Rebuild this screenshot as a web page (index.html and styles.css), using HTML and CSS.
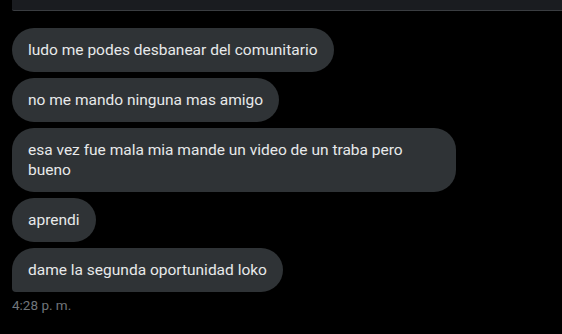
FILE: index.html
```html
<!DOCTYPE html>
<html lang="es">

<head>
    <meta charset="UTF-8">
    <meta name="viewport" content="width=device-width, initial-scale=1.0">
    <title>Mensajes</title>
    <link rel="stylesheet" href="styles.css">
</head>

<body>
    <div class="top-card"></div>

    <div class="messages">
        <div class="bubble">ludo me podes desbanear del comunitario</div>
        <div class="bubble">no me mando ninguna mas amigo</div>
        <div class="bubble">esa vez fue mala mia mande un video de un traba pero bueno</div>
        <div class="bubble">aprendi</div>
        <div class="bubble">dame la segunda oportunidad loko</div>
    </div>

    <div class="time">4:28 p. m.</div>
</body>

</html>
```

FILE: styles.css
```css
body {
    margin: 0;
    background: #000;
    color: #e7e9ea;
    font-family: Roboto, "Liberation Sans", sans-serif;
    height: 100vh;
    overflow: hidden;
}

.top-card {
    margin-left: 12px;
    height: 10px;
    background: #1a1c20;
    border-bottom: 1px solid #3a3d41;
    border-bottom-left-radius: 2px;
}

.messages {
    display: flex;
    flex-direction: column;
    align-items: flex-start;
    gap: 6px;
    padding: 17px 0 0 12px;
}

.bubble {
    max-width: 412px;
    padding: 12px 16px;
    font-size: 15.5px;
    line-height: 20px;
    background: #2f3336;
    border-radius: 22px;
}

/* last message of the group gets the sharp corner */
.bubble:last-child {
    border-bottom-left-radius: 4px;
}

.time {
    padding: 5px 0 0 12px;
    font-size: 13.5px;
    line-height: 16px;
    color: #71767b;
}
```
